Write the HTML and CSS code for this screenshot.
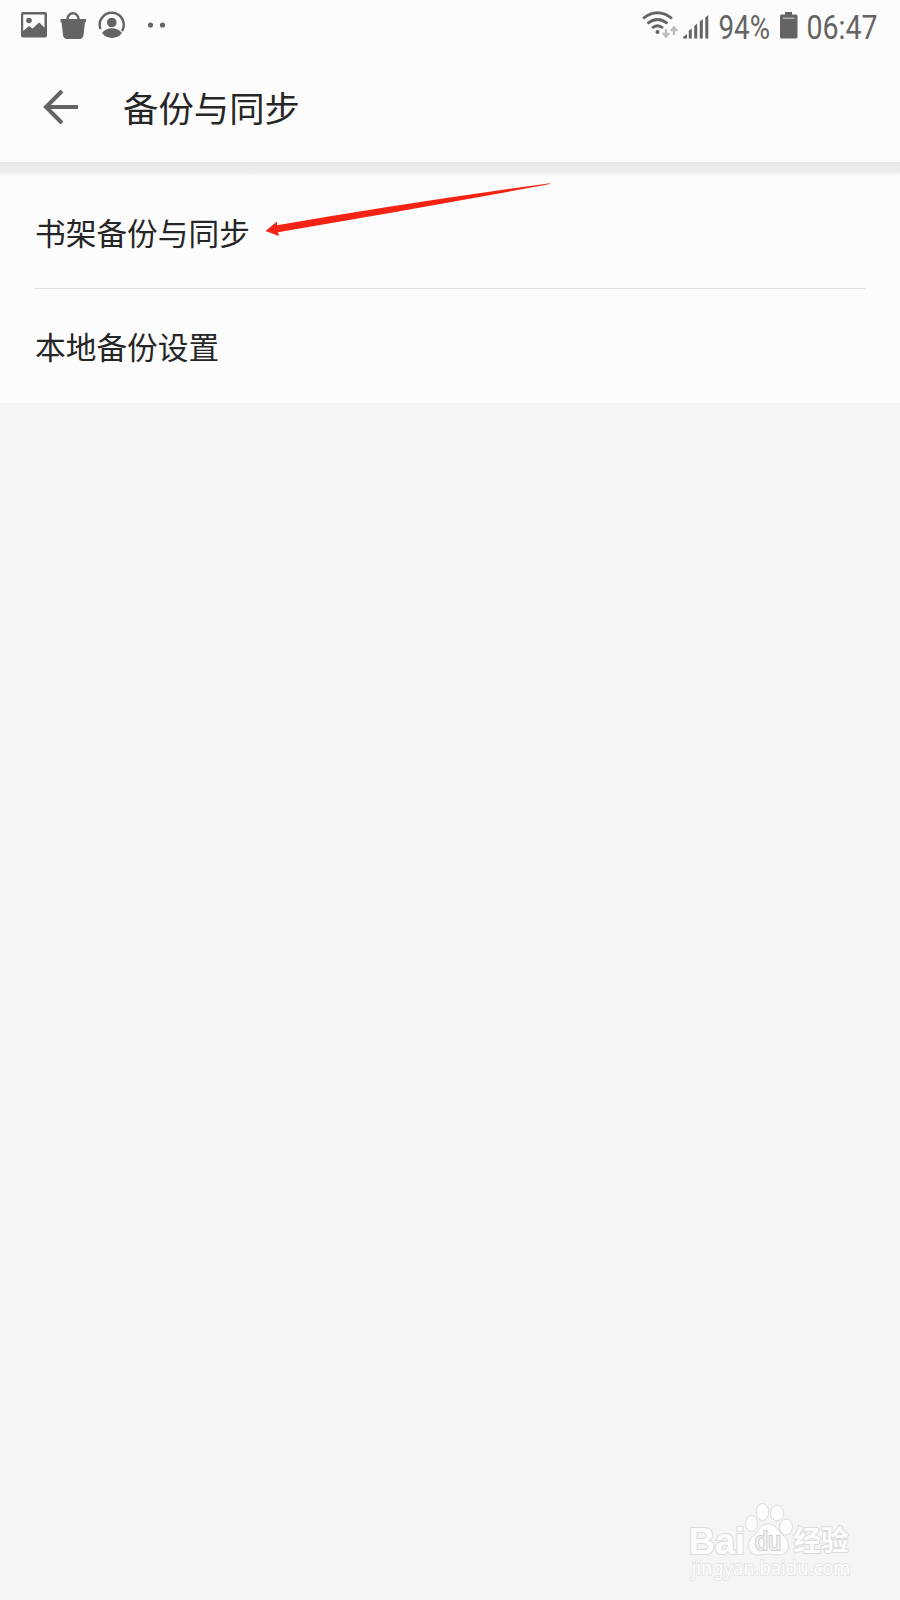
FILE: index.html
```
<!DOCTYPE html>
<html lang="zh-CN">
<head>
  <meta charset="UTF-8" />
  <title>备份与同步</title>
  <link rel="stylesheet" href="styles.css">
</head>
<body>
  <div class="status">
    <svg class="status-left" width="180" height="50" viewBox="0 0 180 50">
      <path fill-rule="evenodd" d="M23 12h22q2 0 2 2v21.500q0 2-2 2H23q-2 0-2-2V14q0-2 2-2zM23.200 14.500V31l5.800-5 3.500 2.500 6.500-6 5.500 5V14.500z" />
      <circle cx="29" cy="20.500" r="2.800" />
      <path d="M60.500 19h25.500v3h-1l-1.500 13q-.5 4-4 4H67q-3.500 0-4-4L61.500 22h-1z" />
      <path class="line" d="M67.500 20c0-9 11-9 11 0" />
      <path class="line" d="M100.500 29A12 12 0 1 1 122 31" />
      <circle cx="111.800" cy="22.500" r="4.800" />
      <path d="M102 33c4-6.500 15.500-6.500 20 0-5 6.500-15 6.500-20 0z" />
      <circle cx="150.500" cy="25" r="2.600" />
      <circle cx="162.500" cy="25" r="2.600" />
    </svg>
    <svg class="status-right" width="260" height="50" viewBox="640 0 260 50">
      <path class="line wifi" d="M643 18.500q14.500-11.500 29 0M647.500 23.500q10-8 20 0M652 28q5.500-4.500 11 0" />
      <circle cx="657.500" cy="32" r="2" />
      <path class="data" d="M666 29v7M662.800 33l3.200 3.500 3.200-3.500M674 35v-7M670.800 31l3.200-3.500 3.200 3.500" />
      <path d="M683 38.500v-1.500l4-3v4.500zM688.800 38.500v-8l3-2v10zM694.200 38.500V26l3-2.500v15zM699.800 38.500V21.500l3-2.500v19.500zM705.300 38.500V17.500l3-2.500v23.500z" />
      <text x="718.500" y="38.500" textLength="51.500" lengthAdjust="spacingAndGlyphs">94%</text>
      <path fill-rule="evenodd" d="M785 12h7v2.500h4q1.500 0 1.500 1.500v21q0 1.500-1.500 1.500h-14.500q-1.500 0-1.500-1.500V16q0-1.500 1.500-1.500h3.500zM783 17.700v.8h11.500v-.8z" />
      <text x="806.500" y="38.500" textLength="71" lengthAdjust="spacingAndGlyphs">06:47</text>
    </svg>
  </div>

  <header class="toolbar">
    <svg class="back" width="36" height="36" viewBox="0 0 36 36">
      <path d="M35 18H3M19 2L3 18l16 16" />
    </svg>
    <h1>备份与同步</h1>
  </header>

  <main class="list">
    <div class="item">书架备份与同步</div>
    <div class="item">本地备份设置</div>
  </main>

  <svg class="pointer" width="286" height="56" viewBox="0 0 286 56">
    <path d="M.5 48L12 38.500v3.800Q140 20 285 .200v.9Q150 26 13 49.200l1 3.800z" />
  </svg>

  <svg class="watermark" width="180" height="100" viewBox="0 0 180 100">
    <text class="brand" x="9" y="53.500" textLength="56" lengthAdjust="spacingAndGlyphs">Bai</text>
    <ellipse cx="71.500" cy="23.500" rx="6" ry="8" />
    <ellipse cx="82.500" cy="12" rx="6.200" ry="8.500" />
    <ellipse cx="97" cy="13" rx="6.500" ry="8" />
    <ellipse cx="106" cy="27" rx="6.500" ry="8" />
    <path d="M88.500 24c7 0 9 6 14.500 11 10 9 5 20-4 20-4 0-7-1-10.500-1s-7 1-10.500 1c-9 0-14-11-4-20 5.500-5 7.500-11 14.500-11z" />
    <text class="du" x="75" y="49.500" textLength="26" lengthAdjust="spacingAndGlyphs">du</text>
    <text class="cn" x="113.500" y="51" textLength="55" lengthAdjust="spacingAndGlyphs">经验</text>
    <text class="url" x="11.500" y="75" textLength="159" lengthAdjust="spacingAndGlyphs">jingyan.baidu.com</text>
  </svg>
</body>
</html>
```
FILE: styles.css
```
body {
  position: relative;
  height: 1600px;
  margin: 0;
  overflow: hidden;
  background-color: #f5f5f5;
  color: #262626;
  font-family: "Noto Sans CJK SC", sans-serif;
}
svg {
  display: block;
}
.status {
  display: flex;
  justify-content: space-between;
  height: 50px;
  background-color: #fcfcfc;
  fill: #646464;
}
.status text {
  font-family: Roboto, sans-serif;
  font-size: 33px;
}
.line {
  fill: none;
  stroke: #646464;
  stroke-width: 2.5;
}
.wifi {
  stroke-width: 2.8;
}
.data {
  fill: none;
  stroke: #bdbdbd;
  stroke-width: 2.4;
}
.toolbar {
  display: flex;
  align-items: center;
  height: 112px;
  box-sizing: border-box;
  padding: 4px 0 0 43px;
  background-color: #fcfcfc;
}
.back {
  fill: none;
  stroke: #646464;
  stroke-width: 4;
  margin-bottom: 2px;
}
.toolbar h1 {
  margin: 0 0 2px 44px;
  font-size: 35.4px;
  font-weight: 400;
  line-height: 50px;
}
.list {
  padding: 0 35px;
  background: linear-gradient(#e6e6e6, #eeeeee 10px, #fcfcfc 14px);
}
.item {
  height: 114px;
  box-sizing: border-box;
  padding-top: 35px;
  font-size: 30.7px;
  line-height: 44px;
}
.item:first-child {
  height: 127px;
  padding-top: 48px;
  border-bottom: 1px solid #dedede;
}
.pointer {
  position: absolute;
  left: 265px;
  top: 183px;
  fill: #f52314;
}
.watermark {
  position: absolute;
  left: 680px;
  top: 1500px;
  fill: #fdfdfd;
  stroke: #dcdcdc;
  stroke-width: 1;
}
.watermark text {
  font-family: "Liberation Sans", sans-serif;
  stroke-width: 2;
  paint-order: stroke;
}
.watermark .brand {
  font-size: 37px;
  font-weight: bold;
}
.watermark .du {
  font-size: 25px;
  fill: #f0f0f0;
  stroke: #cfcfcf;
}
.watermark .cn {
  font-family: "Noto Sans CJK SC", sans-serif;
  font-size: 28px;
  font-weight: bold;
}
.watermark .url {
  font-family: "Noto Sans", sans-serif;
  font-size: 20px;
  stroke: #e3e3e3;
  stroke-width: 1.6;
}
```
